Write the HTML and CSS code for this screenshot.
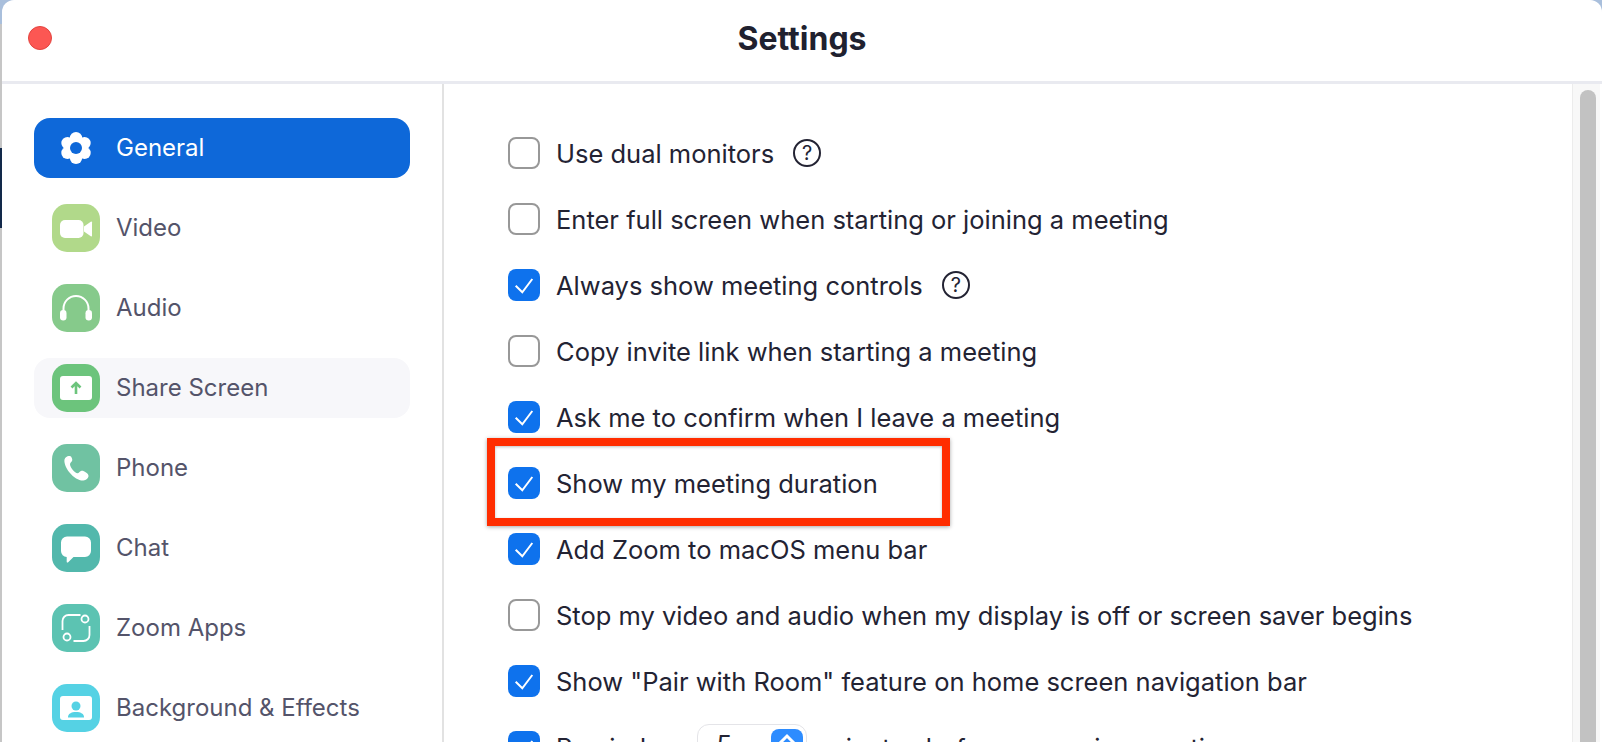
FILE: index.html
```html
<!DOCTYPE html>
<html lang="en">
<head>
    <meta charset="UTF-8">
    <title>Settings</title>
    <link rel="stylesheet" href="styles.css">
</head>
<body>
    <div class="window">
        <div class="titlebar">
            <span class="close-dot"></span>
            <h1>Settings</h1>
        </div>
        <div class="main">
            <div class="sidebar">
                <div class="nav-item active">
                    <span class="nav-icon">
                        <svg viewBox="0 0 48 48" width="48" height="48"><g fill="#fff"><circle cx="24" cy="14.200" r="6.200"/><circle cx="32.500" cy="19.100" r="6.200"/><circle cx="32.500" cy="28.900" r="6.200"/><circle cx="24" cy="33.800" r="6.200"/><circle cx="15.500" cy="28.900" r="6.200"/><circle cx="15.500" cy="19.100" r="6.200"/><circle cx="24" cy="24" r="11"/></g><circle cx="24" cy="24" r="6" fill="#0e68d9"/></svg>
                    </span>
                    <span class="nav-label">General</span>
                </div>
                <div class="nav-item">
                    <span class="nav-icon video">
                        <svg viewBox="0 0 48 48" width="48" height="48"><rect x="8" y="16" width="23.500" height="18" rx="5" fill="#fff"/><path fill="#fff" d="M32 22.500l6.800-4.800c.6-.4 1.200-.1 1.200.6v13.400c0 .7-.6 1-1.200.6L32 27.500z"/></svg>
                    </span>
                    <span class="nav-label">Video</span>
                </div>
                <div class="nav-item">
                    <span class="nav-icon audio">
                        <svg viewBox="0 0 48 48" width="48" height="48"><path fill="none" stroke="#fff" stroke-width="2" d="M11.500 28v-3.500a12.500 12.500 0 0 1 25 0v3.500"/><rect x="8" y="26" width="6.500" height="10.500" rx="3.200" fill="#fff"/><rect x="33.500" y="26" width="6.500" height="10.500" rx="3.200" fill="#fff"/></svg>
                    </span>
                    <span class="nav-label">Audio</span>
                </div>
                <div class="nav-item hovered">
                    <span class="nav-icon share">
                        <svg viewBox="0 0 48 48" width="48" height="48"><rect x="8" y="12" width="32" height="24" rx="3" fill="#fff"/><path fill="none" stroke="#6cc47c" stroke-width="2.600" d="M24 30v-10M19.500 23.500l4.500-4.500 4.500 4.500"/></svg>
                    </span>
                    <span class="nav-label">Share Screen</span>
                </div>
                <div class="nav-item">
                    <span class="nav-icon phone">
                        <svg viewBox="0 0 48 48" width="48" height="48"><path fill="#fff" d="M16.500 12c-1 0-3.500 1.500-4 3.500-.6 3 1 8 5 13 4.500 5.500 10 8.500 14 8 2.500-.3 5-2.500 5-4.500 0-1.500-1-2.500-2.500-3.500-2-1.300-3.500-2-5-1.500-1.500.5-2 2.200-3.500 2.200-2.500 0-7.500-6-7.500-9 0-1.500 1.800-2.200 2.200-3.700.3-1.300-.4-2.800-1.200-4-.7-1-1.500-.5-2.500-.5z"/></svg>
                    </span>
                    <span class="nav-label">Phone</span>
                </div>
                <div class="nav-item">
                    <span class="nav-icon chat">
                        <svg viewBox="0 0 48 48" width="48" height="48"><path fill="#fff" d="M15 12.500h18a6 6 0 0 1 6 6v8.500a6 6 0 0 1-6 6H21.500l-5.300 5.300c-.6.600-1.500.3-1.500-.6V33A6 6 0 0 1 9 27v-8.500a6 6 0 0 1 6-6z"/></svg>
                    </span>
                    <span class="nav-label">Chat</span>
                </div>
                <div class="nav-item">
                    <span class="nav-icon apps">
                        <svg viewBox="0 0 48 48" width="48" height="48"><g fill="none" stroke="#fff" stroke-width="1.800"><path d="M10.500 26v-9a6 6 0 0 1 6-6h12"/><path d="M37.500 22v9a6 6 0 0 1-6 6h-10"/><circle cx="33" cy="15" r="3.500"/><circle cx="15" cy="33" r="3.500"/></g></svg>
                    </span>
                    <span class="nav-label">Zoom Apps</span>
                </div>
                <div class="nav-item">
                    <span class="nav-icon background">
                        <svg viewBox="0 0 48 48" width="48" height="48"><rect x="8" y="12" width="32" height="24" rx="3" fill="#fff"/><circle cx="24" cy="22" r="4.500" fill="#55d2e4"/><path fill="#55d2e4" d="M16 33.500v-.5c0-3 3-5 8-5s8 2 8 5v.5z"/></svg>
                    </span>
                    <span class="nav-label">Background &amp; Effects</span>
                </div>
            </div>
            <div class="content">
                <div class="option">
                    <span class="checkbox"></span>
                    <span>Use dual monitors</span>
                    <span class="help">?</span>
                </div>
                <div class="option">
                    <span class="checkbox"></span>
                    <span>Enter full screen when starting or joining a meeting</span>
                </div>
                <div class="option">
                    <span class="checkbox checked"><svg viewBox="0 0 32 32" width="32" height="32"><path d="M7.700 16.700l6.600 6.600L24.300 10" fill="none" stroke="#fff" stroke-width="2"/></svg></span>
                    <span>Always show meeting controls</span>
                    <span class="help">?</span>
                </div>
                <div class="option">
                    <span class="checkbox"></span>
                    <span>Copy invite link when starting a meeting</span>
                </div>
                <div class="option">
                    <span class="checkbox checked"><svg viewBox="0 0 32 32" width="32" height="32"><path d="M7.700 16.700l6.600 6.600L24.300 10" fill="none" stroke="#fff" stroke-width="2"/></svg></span>
                    <span>Ask me to confirm when I leave a meeting</span>
                </div>
                <div class="option highlighted">
                    <span class="checkbox checked"><svg viewBox="0 0 32 32" width="32" height="32"><path d="M7.700 16.700l6.600 6.600L24.300 10" fill="none" stroke="#fff" stroke-width="2"/></svg></span>
                    <span>Show my meeting duration</span>
                </div>
                <div class="option">
                    <span class="checkbox checked"><svg viewBox="0 0 32 32" width="32" height="32"><path d="M7.700 16.700l6.600 6.600L24.300 10" fill="none" stroke="#fff" stroke-width="2"/></svg></span>
                    <span>Add Zoom to macOS menu bar</span>
                </div>
                <div class="option">
                    <span class="checkbox"></span>
                    <span>Stop my video and audio when my display is off or screen saver begins</span>
                </div>
                <div class="option">
                    <span class="checkbox checked"><svg viewBox="0 0 32 32" width="32" height="32"><path d="M7.700 16.700l6.600 6.600L24.300 10" fill="none" stroke="#fff" stroke-width="2"/></svg></span>
                    <span>Show "Pair with Room" feature on home screen navigation bar</span>
                </div>
                <div class="option">
                    <span class="checkbox checked"><svg viewBox="0 0 32 32" width="32" height="32"><path d="M7.700 16.700l6.600 6.600L24.300 10" fill="none" stroke="#fff" stroke-width="2"/></svg></span>
                    <span>Remind me</span>
                    <span class="stepper">
                        <span class="stepper-value">5</span>
                        <span class="stepper-btn"><svg viewBox="0 0 32 32" width="32" height="32"><path d="M9 14l7-7 7 7" fill="none" stroke="#fff" stroke-width="3"/></svg></span>
                    </span>
                    <span>minutes before upcoming meetings</span>
                </div>
            </div>
            <div class="scrollbar"><div class="thumb"></div></div>
        </div>
    </div>
</body>
</html>
```

FILE: styles.css
```css
html, body {
    height: 100%;
}

body {
    margin: 0;
    overflow: hidden;
    background: linear-gradient(to bottom, #a9bfdc 0 24px, #c6c6c6 24px 148px, #12294a 148px 228px, #c6c6c6 228px);
    font-family: Inter, "Liberation Sans", sans-serif;
}

.window {
    height: 742px;
    margin-left: 2px;
    background-color: #fff;
    border-radius: 12px 12px 0 0;
    display: flex;
    flex-direction: column;
    overflow: hidden;
}

.titlebar {
    height: 81px;
    flex-shrink: 0;
    border-bottom: 3px solid #e9eaf0;
    display: flex;
    align-items: center;
    justify-content: center;
    position: relative;
}

.titlebar h1 {
    margin: 0 0 4px;
    font-size: 32px;
    font-weight: 700;
    color: #20212f;
}

.close-dot {
    position: absolute;
    left: 26px;
    top: 26px;
    width: 24px;
    height: 24px;
    border-radius: 50%;
    background-color: #fc5753;
    box-sizing: border-box;
    border: 1px solid #e3443f;
}

.main {
    flex-grow: 1;
    display: flex;
    min-height: 0;
}

.sidebar {
    width: 442px;
    flex-shrink: 0;
    box-sizing: border-box;
    border-right: 2px solid #e2e2e2;
    padding: 34px 0 0 32px;
}

.nav-item {
    width: 376px;
    height: 60px;
    margin-bottom: 20px;
    padding-left: 18px;
    box-sizing: border-box;
    display: flex;
    align-items: center;
    gap: 16px;
    border-radius: 16px;
    font-size: 24px;
    color: #54546a;
}

.nav-item.active {
    background-color: #0e68d9;
    color: #fff;
}

.nav-item.hovered {
    background-color: #f7f7fa;
}

.nav-label {
    margin-top: -2px;
}

.nav-icon {
    width: 48px;
    height: 48px;
    flex-shrink: 0;
    border-radius: 15px;
}

.nav-icon svg {
    display: block;
}

.video { background-color: #b1d98a; }
.audio { background-color: #86ca8b; }
.share { background-color: #6cc47c; }
.phone { background-color: #70c2a2; }
.chat { background-color: #52b8ac; }
.apps { background-color: #5cc3b2; }
.background { background-color: #55d2e4; }

.content {
    flex-grow: 1;
    padding: 53px 0 0 64px;
}

.option {
    height: 32px;
    margin-bottom: 34px;
    display: flex;
    align-items: center;
    gap: 16px;
    font-size: 25.5px;
    color: #232333;
    white-space: nowrap;
    position: relative;
}

.checkbox {
    width: 32px;
    height: 32px;
    flex-shrink: 0;
    box-sizing: border-box;
    border: 2px solid #989898;
    border-radius: 8px;
}

.checkbox.checked {
    border: none;
    background-color: #0e72ed;
}

.checkbox svg {
    display: block;
}

.help {
    width: 28px;
    height: 28px;
    margin-left: 3px;
    box-sizing: border-box;
    border: 2px solid #232333;
    border-radius: 50%;
    font-size: 20px;
    line-height: 24px;
    text-align: center;
}

.highlighted::after {
    content: "";
    position: absolute;
    left: -21px;
    top: -29px;
    width: 463px;
    height: 88px;
    box-sizing: border-box;
    border: 8px solid #ff2d00;
    box-shadow: 0 1px 4px rgba(0, 0, 0, 0.35), inset 0 1px 3px rgba(0, 0, 0, 0.25);
}

.stepper {
    width: 110px;
    height: 46px;
    margin-left: -9px;
    box-sizing: border-box;
    border: 1px solid #e4e4e8;
    border-radius: 12px;
    padding: 4px 3px 0 0;
    display: flex;
    justify-content: space-between;
}

.stepper-value {
    padding-left: 18px;
}

.stepper-btn {
    width: 32px;
    height: 42px;
    border-radius: 8px;
    background-color: #2d8cff;
}

.stepper-btn svg {
    display: block;
}

.scrollbar {
    width: 28px;
    flex-shrink: 0;
    margin-right: 2px;
    box-sizing: border-box;
    background-color: #f8f8f8;
    border-left: 1px solid #ececec;
    padding: 6px 4px 0 7px;
}

.thumb {
    height: 800px;
    border-radius: 8px;
    background-color: #c2c2c2;
}
```
